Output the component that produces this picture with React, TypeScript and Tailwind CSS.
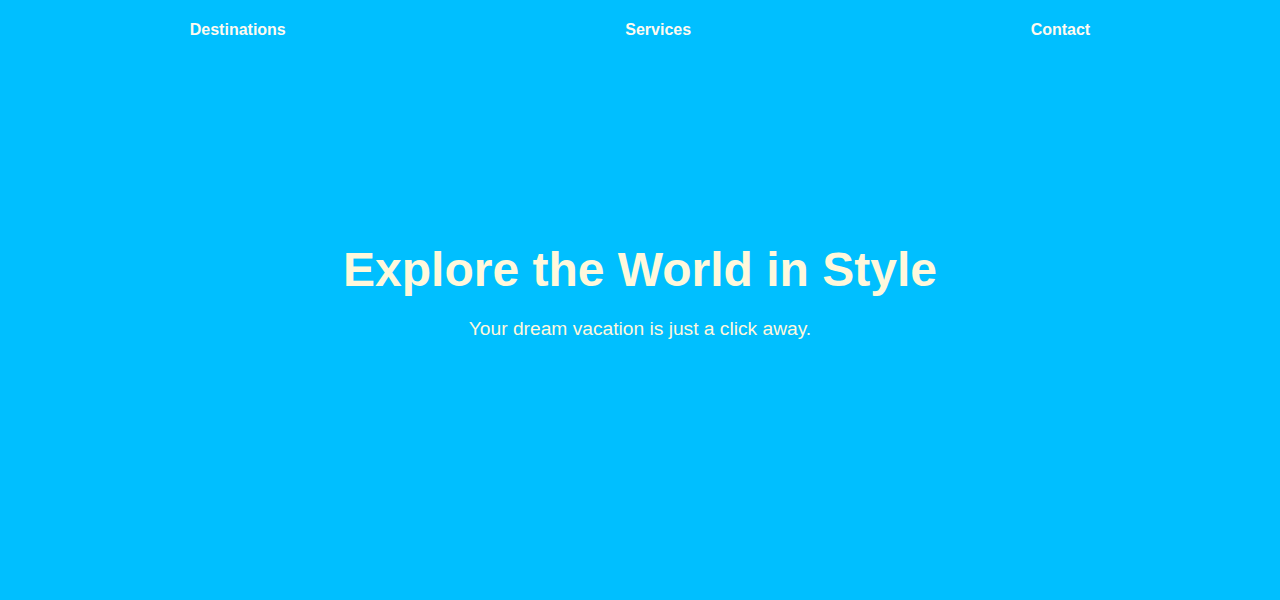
export default function App() {
  return (
    <div
      className="min-h-screen w-full bg-[#00bfff]"
      style={{ fontFamily: '"Liberation Sans", Arial, sans-serif' }}
    >
      <nav className="flex justify-around px-5 pt-[21px] pb-[19px]">
        <a className="text-base leading-[normal] font-bold text-[#fffaf0]">Destinations</a>
        <a className="text-base leading-[normal] font-bold text-[#fffaf0]">Services</a>
        <a className="text-base leading-[normal] font-bold text-[#fffaf0]">Contact</a>
      </nav>
      <section className="flex flex-col items-center pt-[184px] text-center">
        <h1 className="text-[48px] leading-[normal] font-bold text-[#fff8dc]">
          Explore the World in Style
        </h1>
        <p className="mt-[21px] text-[19.2px] leading-[normal] text-[#fff8dc]">
          Your dream vacation is just a click away.
        </p>
      </section>
    </div>
  );
}
